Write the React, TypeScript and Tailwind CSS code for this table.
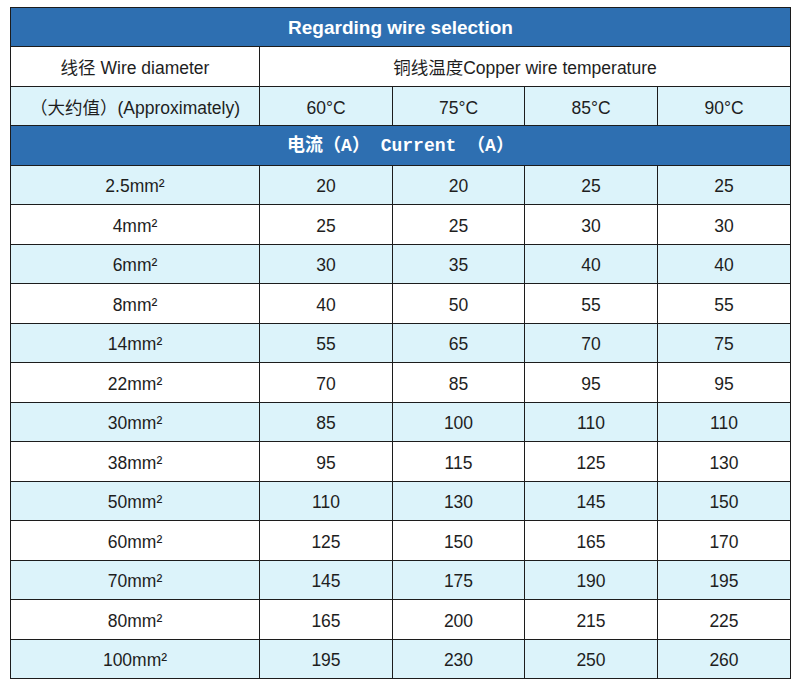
import React from "react";

const rows: [string, number, number, number, number][] = [
  ["2.5mm²", 20, 20, 25, 25],
  ["4mm²", 25, 25, 30, 30],
  ["6mm²", 30, 35, 40, 40],
  ["8mm²", 40, 50, 55, 55],
  ["14mm²", 55, 65, 70, 75],
  ["22mm²", 70, 85, 95, 95],
  ["30mm²", 85, 100, 110, 110],
  ["38mm²", 95, 115, 125, 130],
  ["50mm²", 110, 130, 145, 150],
  ["60mm²", 125, 150, 165, 170],
  ["70mm²", 145, 175, 190, 195],
  ["80mm²", 165, 200, 215, 225],
  ["100mm²", 195, 230, 250, 260],
];

const cell = "flex items-center justify-center pt-[3px] text-[17.5px] text-[#1e1e1e]";

export default function App() {
  return (
    <div
      className="w-[800px] h-[689px] bg-white pt-[7px] pl-[10px]"
      style={{ fontFamily: '"Liberation Sans", Arial, "Noto Sans CJK SC", sans-serif' }}
    >
      <div className="grid w-[781px] grid-cols-[248px_132px_131px_132px_132px] auto-rows-[38.47px] gap-px p-px bg-[#1c1c1c]">
        <div className="col-span-5 flex items-center justify-center pt-[2px] bg-[#2e6fb1] text-white font-bold text-[19px]">
          Regarding wire selection
        </div>
        <div className={`${cell} bg-white`}>线径 Wire diameter</div>
        <div className={`${cell} col-span-4 bg-white`}>铜线温度Copper wire temperature</div>
        <div className={`${cell} bg-[#dcf3fa]`}>（大约值）(Approximately)</div>
        <div className={`${cell} bg-[#dcf3fa]`}>60°C</div>
        <div className={`${cell} bg-[#dcf3fa]`}>75°C</div>
        <div className={`${cell} bg-[#dcf3fa]`}>85°C</div>
        <div className={`${cell} bg-[#dcf3fa]`}>90°C</div>
        <div
          className="col-span-5 flex items-center justify-center pt-[2px] bg-[#2e6fb1] text-white font-bold text-[18px]"
          style={{ fontFamily: '"Liberation Mono", "Noto Sans CJK SC", monospace' }}
        >
          电流（A） Current （A）
        </div>
        {rows.map((r, i) => {
          const bg = i % 2 === 0 ? "bg-[#dcf3fa]" : "bg-white";
          return (
            <React.Fragment key={r[0]}>
              <div className={`${cell} ${bg}`}>{r[0]}</div>
              <div className={`${cell} ${bg}`}>{r[1]}</div>
              <div className={`${cell} ${bg}`}>{r[2]}</div>
              <div className={`${cell} ${bg}`}>{r[3]}</div>
              <div className={`${cell} ${bg}`}>{r[4]}</div>
            </React.Fragment>
          );
        })}
      </div>
    </div>
  );
}
